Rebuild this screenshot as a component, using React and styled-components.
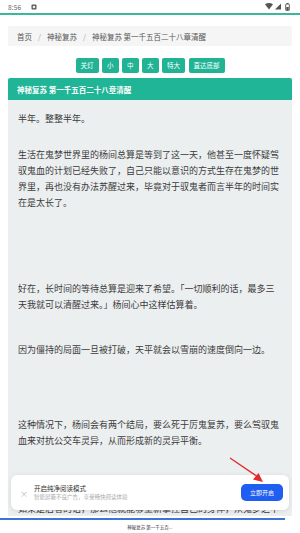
import styled, { createGlobalStyle } from "styled-components";

const GlobalStyle = createGlobalStyle`
  html, body {
    margin: 0;
    padding: 0;
    background: #fff;
  }
  body {
    font-family: "Noto Sans CJK SC", "Noto Sans", sans-serif;
  }
`;

const Screen = styled.div`
  position: relative;
  width: 300px;
  height: 533px;
  overflow: hidden;
  display: flex;
  flex-direction: column;
  background: #fff;
`;

const StatusBar = styled.div`
  height: 13px;
  flex-shrink: 0;
  display: flex;
  align-items: center;
  padding: 0 9px 0 8px;
  border-bottom: 2px solid #39b89c;
  color: #666;
  font-size: 6.5px;
`;

const Clock = styled.span`
  margin-right: 10px;
  letter-spacing: 0.2px;
`;

const StatusRight = styled.div`
  margin-left: auto;
  display: flex;
  align-items: center;
  gap: 2px;
`;

const Breadcrumb = styled.nav`
  margin: 11px 8px 0;
  height: 20px;
  flex-shrink: 0;
  display: flex;
  align-items: center;
  padding: 0 9px;
  background: #f5f5f5;
  border-radius: 2px;
  font-size: 7.5px;
  color: #555;
`;

const Sep = styled.span`
  color: #aaa;
  margin: 0 6px;
`;

const Toolbar = styled.div`
  margin-top: 12px;
  flex-shrink: 0;
  display: flex;
  justify-content: center;
  gap: 3.5px;
`;

const ToolButton = styled.button`
  height: 15px;
  padding: 0 5px;
  min-width: 16px;
  border: none;
  border-radius: 2px;
  background: #20b394;
  color: #fff;
  font-family: inherit;
  font-size: 6.5px;
  line-height: 15px;
`;

const Panel = styled.section`
  margin: 5px 8px 0;
  flex: 1;
  min-height: 0;
  display: flex;
  flex-direction: column;
  overflow: hidden;
  border-radius: 2px 2px 0 0;
`;

const PanelHeader = styled.h1`
  margin: 0;
  height: 22px;
  flex-shrink: 0;
  display: flex;
  align-items: center;
  padding: 0 9px;
  background: #1fb596;
  color: #fff;
  font-size: 7.5px;
  font-weight: 700;
`;

const PanelBody = styled.div`
  flex: 1;
  min-height: 0;
  overflow: hidden;
  background: #eceff0;
  padding: 11px 10px 0;
`;

const Para = styled.p`
  margin: ${(p) => p.$gap}px 0 0;
  font-size: 9px;
  line-height: 16px;
  color: #3b3b3b;
`;

const Footer = styled.footer`
  height: 17px;
  flex-shrink: 0;
  padding-top: 2px;
  box-sizing: border-box;
`;

const Progress = styled.div`
  height: 1.5px;
  background: #3f74d6;
`;

const Caption = styled.div`
  margin-top: 4px;
  text-align: center;
  font-size: 4.5px;
  line-height: 7px;
  color: #333;
`;

const Popup = styled.div`
  position: absolute;
  left: 11px;
  right: 11px;
  bottom: 23px;
  height: 35px;
  display: flex;
  align-items: center;
  padding: 0 6px 0 9px;
  background: #fff;
  border-radius: 6px;
  box-shadow: 0 1px 5px rgba(0, 0, 0, 0.1);
`;

const Close = styled.span`
  color: #bbb;
  font-size: 8px;
  margin-right: 6px;
  margin-top: 2px;
`;

const PopupText = styled.div`
  display: flex;
  flex-direction: column;
  gap: 2px;
`;

const PopupTitle = styled.div`
  font-size: 6.5px;
  line-height: 8px;
  color: #333;
`;

const PopupSub = styled.div`
  font-size: 5.5px;
  line-height: 7px;
  color: #aaa;
`;

const OpenButton = styled.button`
  margin-left: auto;
  width: 42px;
  height: 17px;
  border: none;
  border-radius: 5px;
  background: #1f5ef0;
  color: #fff;
  font-family: inherit;
  font-size: 6px;
`;

const Arrow = styled.svg`
  position: absolute;
  left: 225px;
  top: 452px;
`;

const buttons = ["关灯", "小", "中", "大", "特大", "直达底部"];

const paragraphs = [
  { gap: 0, text: "半年。整整半年。" },
  {
    gap: 20,
    text: "生活在鬼梦世界里的杨间总算是等到了这一天，他甚至一度怀疑驾驭鬼血的计划已经失败了，自己只能以意识的方式生存在鬼梦的世界里，再也没有办法苏醒过来，毕竟对于驭鬼者而言半年的时间实在是太长了。",
  },
  {
    gap: 70,
    text: "好在，长时间的等待总算是迎来了希望。「一切顺利的话，最多三天我就可以清醒过来。」杨间心中这样估算着。",
  },
  { gap: 29, text: "因为僵持的局面一旦被打破，天平就会以雪崩的速度倒向一边。" },
  {
    gap: 59,
    text: "这种情况下，杨间会有两个结局，要么死于厉鬼复苏，要么驾驭鬼血来对抗公交车灵异，从而形成新的灵异平衡。",
  },
  {
    gap: 52,
    text: "如果是后者的话，那么他就能够重新掌控自己的身体，从鬼梦之中彻底苏醒过来，重新回到现实世界。",
  },
];

function StatusIcons() {
  return (
    <StatusRight>
      <svg width="8" height="7" viewBox="0 0 8 7">
        <path d="M0 1.2 Q4 -1 8 1.2 L4 6.5 Z" fill="#555" />
      </svg>
      <svg width="6" height="7" viewBox="0 0 6 7">
        <path d="M6 0.5 V6.5 H0 Z" fill="#555" />
      </svg>
      <svg width="6" height="8" viewBox="0 0 6 8" style={{ marginLeft: 2 }}>
        <rect x="1.5" y="0" width="2" height="1" fill="#555" />
        <rect x="0.7" y="1" width="3.6" height="6.5" rx="0.6" fill="none" stroke="#555" strokeWidth="0.9" />
        <rect x="1.3" y="4" width="2.4" height="3" fill="#555" />
      </svg>
    </StatusRight>
  );
}

export default function App() {
  return (
    <>
      <GlobalStyle />
      <Screen>
        <StatusBar>
          <Clock>8:56</Clock>
          <svg width="6" height="6" viewBox="0 0 6 6">
            <rect x="0.5" y="0.5" width="5" height="5" rx="1" fill="#555" />
            <rect x="1.8" y="1.8" width="2.4" height="2.4" fill="#eee" />
          </svg>
          <StatusIcons />
        </StatusBar>

        <Breadcrumb>
          <span>首页</span>
          <Sep>/</Sep>
          <span>神秘复苏</span>
          <Sep>/</Sep>
          <span>神秘复苏 第一千五百二十八章清醒</span>
        </Breadcrumb>

        <Toolbar>
          {buttons.map((label) => (
            <ToolButton key={label}>{label}</ToolButton>
          ))}
        </Toolbar>

        <Panel>
          <PanelHeader>神秘复苏 第一千五百二十八章清醒</PanelHeader>
          <PanelBody>
            {paragraphs.map((p, i) => (
              <Para key={i} $gap={p.gap}>
                {p.text}
              </Para>
            ))}
          </PanelBody>
        </Panel>

        <Footer>
          <Progress style={{ width: "95%" }} />
          <Caption>神秘复苏 第一千五百...</Caption>
        </Footer>

        <Popup>
          <Close>×</Close>
          <PopupText>
            <PopupTitle>开启纯净阅读模式</PopupTitle>
            <PopupSub>智能屏蔽不良广告，享受畅快阅读体验</PopupSub>
          </PopupText>
          <OpenButton>立即开启</OpenButton>
        </Popup>

        <Arrow width="45" height="36" viewBox="0 0 45 36">
          <line x1="5" y1="6" x2="33" y2="25" stroke="#e32b2b" strokeWidth="1.3" />
          <path d="M38 30 L28 27.5 L33.5 21 Z" fill="#e32b2b" />
        </Arrow>
      </Screen>
    </>
  );
}
